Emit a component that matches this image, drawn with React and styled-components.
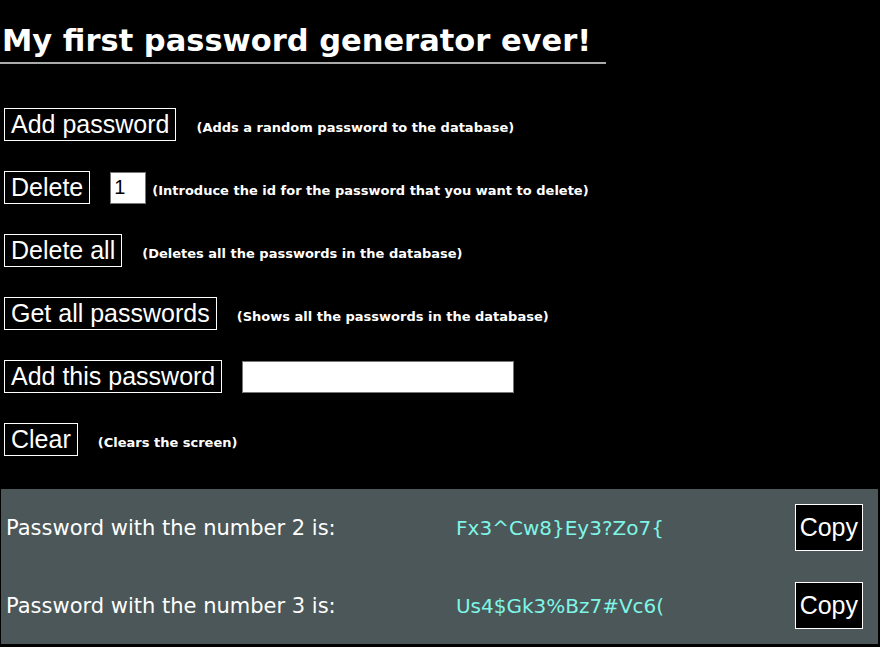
import React from "react";
import styled, { createGlobalStyle } from "styled-components";

const comic = `"Comic Sans MS", "DejaVu Sans", sans-serif`;
const arial = `"Liberation Sans", Arial, sans-serif`;

const GlobalStyle = createGlobalStyle`
  body {
    margin: 0;
    background: #000000;
    color: #ffffff;
    font-family: ${comic};
  }
`;

const Page = styled.main`
  display: flex;
  flex-direction: column;
  width: 880px;
  min-height: 647px;
`;

const Title = styled.h1`
  width: 606px;
  margin: 0;
  padding: 20px 0 0 2px;
  box-sizing: border-box;
  font-family: ${comic};
  font-weight: 700;
  font-size: 30.5px;
  line-height: 42px;
  white-space: nowrap;
  color: #ffffff;
  border-bottom: 2px solid #aaaaaa;
`;

const Controls = styled.section`
  display: flex;
  flex-direction: column;
  gap: 30px;
  margin-top: 44px;
  padding-left: 4px;
`;

const Row = styled.div`
  display: flex;
  align-items: center;
`;

const Button = styled.button`
  margin-right: 20px;
  padding: 1px 6px;
  font-family: ${arial};
  font-size: 25px;
  line-height: 29px;
  color: #ffffff;
  background: #000000;
  border: 1px solid #ffffff;
  border-radius: 0;
`;

const Hint = styled.span`
  padding-top: 5px;
  font-family: ${comic};
  font-weight: 700;
  font-size: 13px;
  color: #ffffff;
`;

const Field = styled.input`
  box-sizing: border-box;
  width: ${(p) => p.$width}px;
  height: 32px;
  margin-right: ${(p) => p.$gap || 0}px;
  padding: 0 3px;
  font-family: ${arial};
  font-size: 20px;
  color: #000000;
  background: #ffffff;
  border: 1px solid #767676;
  outline: none;
`;

const Results = styled.section`
  display: flex;
  flex-direction: column;
  gap: 31px;
  margin: 33px 2px 3px 1px;
  padding: 15px 15px 15px 5px;
  background: #4b5758;
`;

const ResultRow = styled.div`
  display: grid;
  grid-template-columns: 340px 428px 1fr;
  align-items: center;
`;

const Label = styled.span`
  font-family: ${comic};
  font-size: 21px;
  white-space: nowrap;
  color: #ffffff;
`;

const Secret = styled.span`
  text-align: center;
  font-family: ${comic};
  font-size: 20px;
  color: #7ff5e6;
`;

const CopyButton = styled.button`
  justify-self: end;
  padding: 8px 4px;
  font-family: ${arial};
  font-size: 25px;
  line-height: 29px;
  color: #ffffff;
  background: #000000;
  border: 1px solid #ffffff;
  border-radius: 0;
`;

const passwords = [
  { id: 2, value: "Fx3^Cw8}Ey3?Zo7{" },
  { id: 3, value: "Us4$Gk3%Bz7#Vc6(" },
];

export default function App() {
  return (
    <Page>
      <GlobalStyle />
      <Title>My first password generator ever!</Title>
      <Controls>
        <Row>
          <Button>Add password</Button>
          <Hint>(Adds a random password to the database)</Hint>
        </Row>
        <Row>
          <Button>Delete</Button>
          <Field $width={36} $gap={6} defaultValue="1" />
          <Hint>(Introduce the id for the password that you want to delete)</Hint>
        </Row>
        <Row>
          <Button>Delete all</Button>
          <Hint>(Deletes all the passwords in the database)</Hint>
        </Row>
        <Row>
          <Button>Get all passwords</Button>
          <Hint>(Shows all the passwords in the database)</Hint>
        </Row>
        <Row>
          <Button>Add this password</Button>
          <Field $width={272} />
        </Row>
        <Row>
          <Button>Clear</Button>
          <Hint>(Clears the screen)</Hint>
        </Row>
      </Controls>
      <Results>
        {passwords.map((p) => (
          <ResultRow key={p.id}>
            <Label>Password with the number {p.id} is:</Label>
            <Secret>{p.value}</Secret>
            <CopyButton>Copy</CopyButton>
          </ResultRow>
        ))}
      </Results>
    </Page>
  );
}
